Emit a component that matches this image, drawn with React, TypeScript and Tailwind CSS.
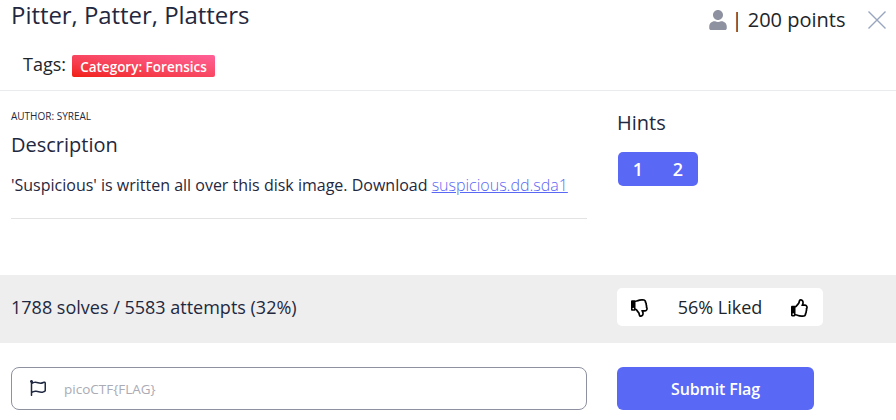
import { FaUser, FaRegFlag, FaRegThumbsDown, FaRegThumbsUp } from "react-icons/fa";

function Header() {
  return (
    <header className="flex h-[91px] justify-between border-b border-[#e9ebed]">
      <div className="pl-[11px]">
        <h1 className="text-[24px] leading-[30px] tracking-[-0.05px]">Pitter, Patter, Platters</h1>
        <div className="mt-[21px] flex items-center pl-3 text-[#212529]">
          <span className="text-[18px] leading-[27px]">Tags:</span>
          <span className="ml-[6px] mt-[3px] flex h-[22px] w-[143px] items-center justify-center rounded-[2px] bg-linear-to-tr from-[#f11c0a] to-[#ff6098] pt-[2px] text-[13.5px] font-semibold text-white">
            Category: Forensics
          </span>
        </div>
      </div>
      <div className="flex h-10 items-center pr-[10.5px] text-[20px] text-[#212529]">
        <FaUser className="size-5 text-[#8d91a0]" />
        <span className="ml-[4px] whitespace-pre">| 200 points</span>
        <svg className="ml-[22px] size-[18px]" viewBox="0 0 18 18" stroke="#9aa5bf" strokeWidth="1.4">
          <path d="M.5.5l17 17M17.5.5l-17 17" />
        </svg>
      </div>
    </header>
  );
}

export default function App() {
  return (
    <main className="h-[420px] w-[896px] overflow-hidden bg-white font-['Open_Sans',sans-serif] text-[#1f2840]">
      <Header />
      <section className="flex h-[184px]">
        <div className="ml-[11px] w-[576px]">
          <p className="mt-[18px] text-[10px] leading-[15px]">AUTHOR: SYREAL</p>
          <h2 className="mt-[6px] text-[20px] leading-[30px]">Description</h2>
          <p className="mt-[13px] border-b border-[#e3e3e4] pb-[21px] text-[16px] leading-[24px]">
            'Suspicious' is written all over this disk image. Download{" "}
            <a className="font-light text-[#5a68f6] underline">suspicious.dd.sda1</a>
          </p>
        </div>
        <div className="ml-[30px]">
          <h2 className="mt-[17px] text-[20px] leading-[30px]">Hints</h2>
          <div className="mt-[14px] ml-px flex h-[34px] w-20 items-center justify-around rounded-[5px] bg-[#5a68f6] text-[18px] font-semibold text-white">
            <button>1</button>
            <button>2</button>
          </div>
        </div>
      </section>
      <section className="flex h-[68px] items-center bg-[#eeeeee] pb-[4px] text-[18px]">
        <span className="ml-[11px] w-[606px]">1788 solves / 5583 attempts (32%)</span>
        <div className="flex h-[38px] w-[206px] items-center justify-between rounded-[5px] bg-white px-[14px] text-[#212529]">
          <FaRegThumbsDown className="mt-px size-[18px] text-black" />
          <span>56% Liked</span>
          <FaRegThumbsUp className="mt-px size-[18px] text-black" />
        </div>
      </section>
      <section className="mt-6 flex">
        <label className="ml-[11px] flex h-[43px] w-[576px] items-center rounded-[8px] border border-[#8d91a0] pl-[18px]">
          <FaRegFlag className="mb-[2px] size-4" />
          <span className="ml-[18px] pt-px text-[13.5px] text-[#aaabb5]">picoCTF&#123;FLAG&#125;</span>
        </label>
        <button className="ml-[30px] h-[43px] w-[197px] rounded-[6px] bg-[#5a68f6] text-[16px] font-semibold tracking-[-0.12px] text-white">Submit Flag</button>
      </section>
    </main>
  );
}
